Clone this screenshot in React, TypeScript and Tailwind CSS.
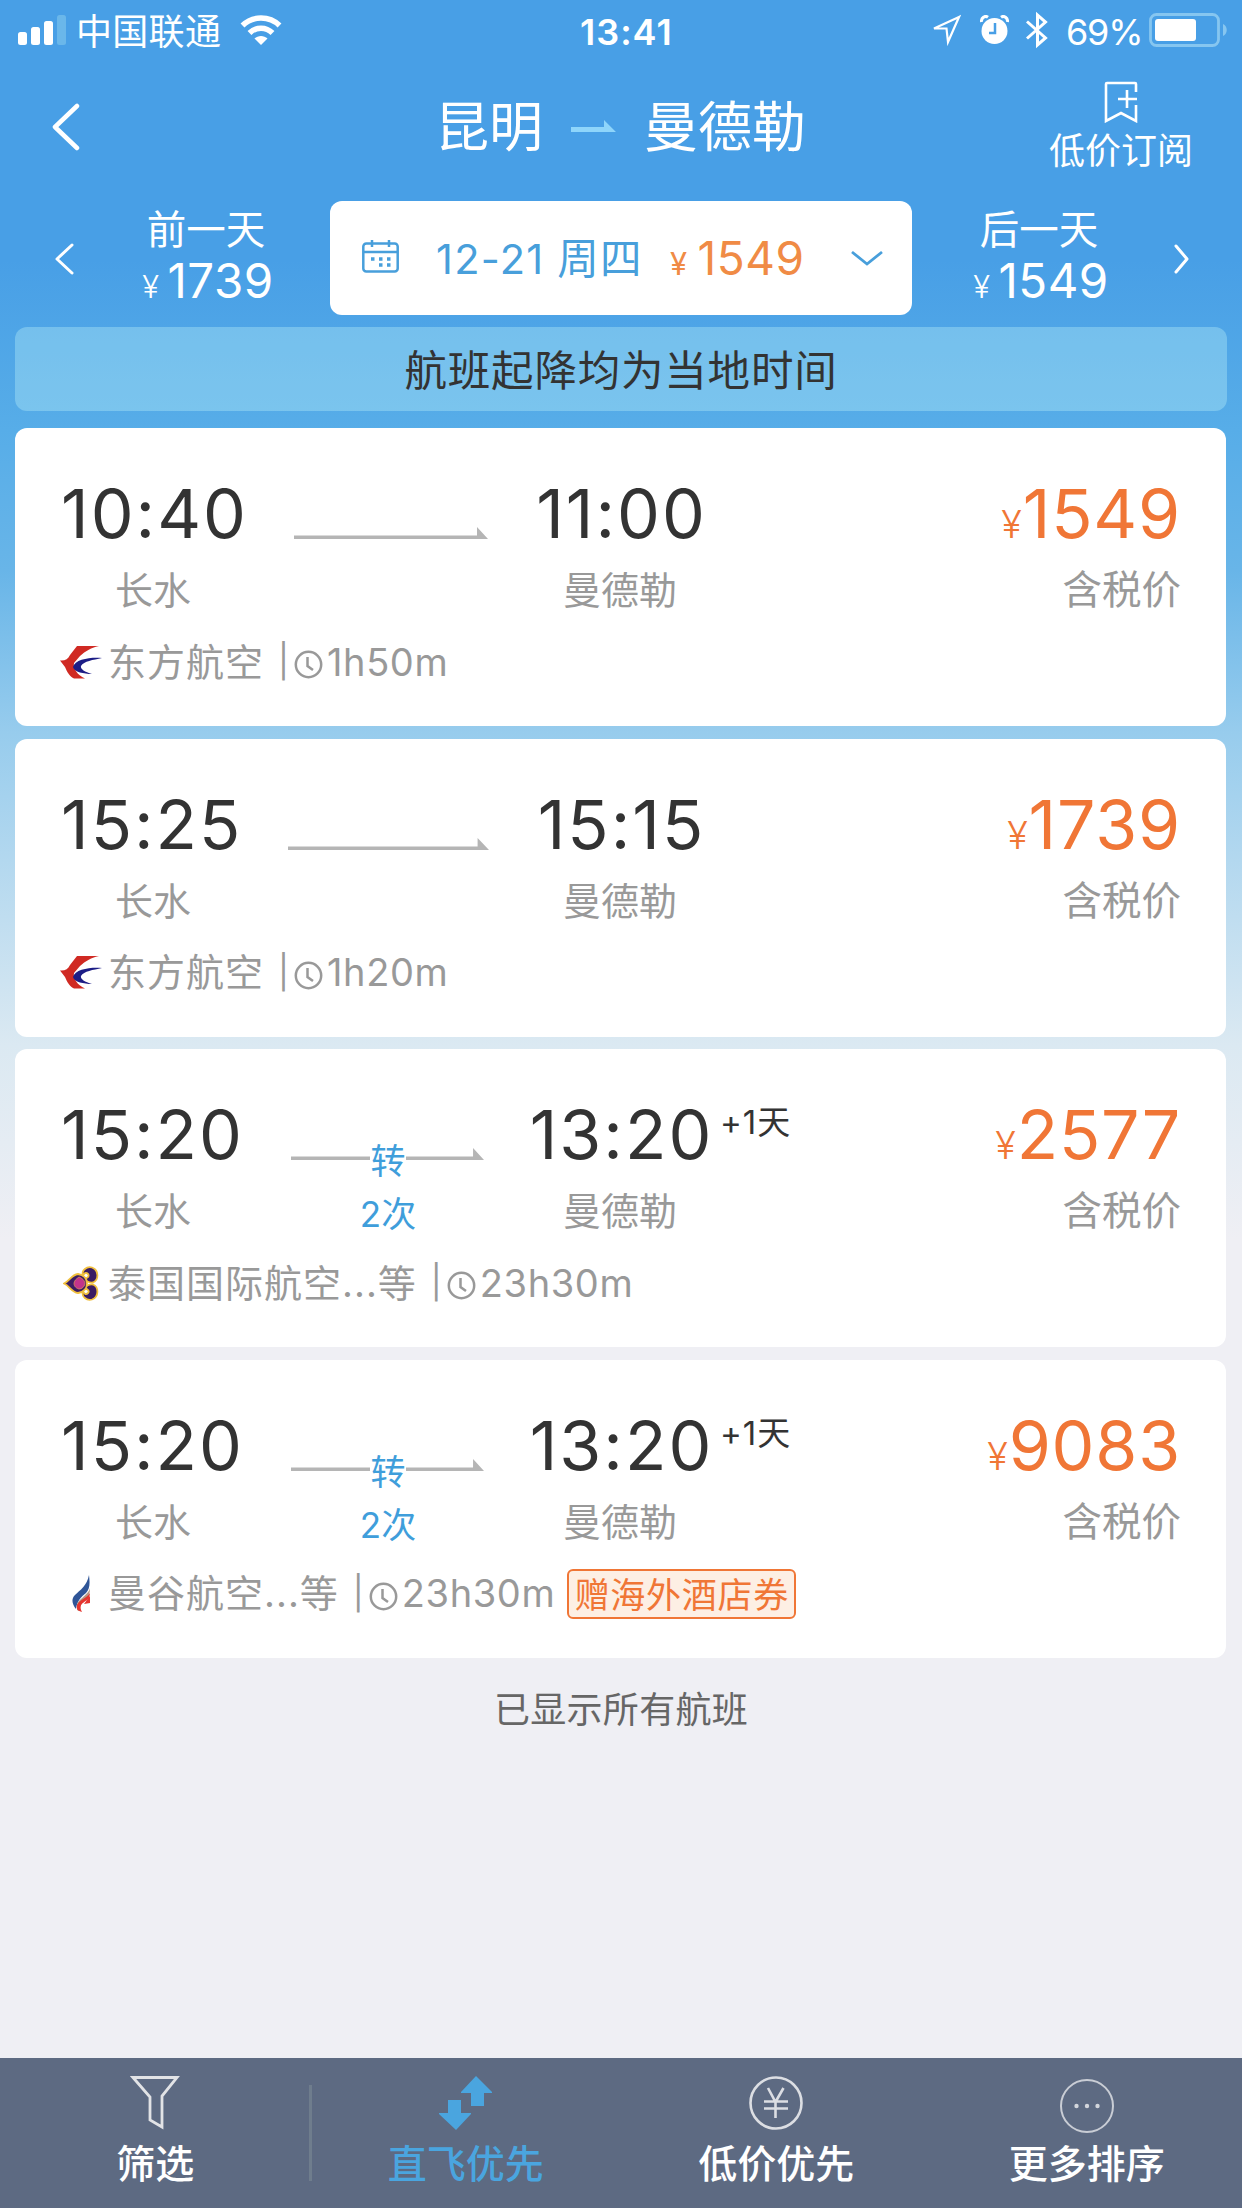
import type { ReactNode } from 'react';

interface Flight {
  depart: string;
  arrive: string;
  nextDay?: boolean;
  transfers?: number;
  lineClass: string;
  price: string;
  airline: string;
  logo: ReactNode;
  duration: string;
  coupon?: string;
}

const EasternLogo = () => (
  <svg className="w-[42px] h-[33px]" viewBox="0 0 42 33" aria-hidden="true">
    <path d="M17 0H39C30 2 26 5 20 10L14 17C13 22 17 29 25 32.500H14C10 31 7 26 5 21L0 14.500C5 15 8 13 10 9Z" fill="#d02a23" />
    <path d="M42 12C31 11 15 13 13 21C14 26 24 28 32 28C25 26 20 23 21 20C24 15 33 14 42 12Z" fill="#1c1d86" />
  </svg>
);

const ThaiLogo = () => (
  <svg className="w-[36px] h-[35px]" viewBox="0 0 36 35" aria-hidden="true">
    <g fill="#3b1c63" stroke="#f0bf3d" strokeWidth="1.800">
      <path d="M20 10C18 4 24 0 29 1.500C36 4 36 14 30 16.500C26 17 22 15 21 12C24 13 27 10 25 8C23 6 21 7 20 10Z" />
      <path d="M20 25C18 31 24 35 29 33.500C36 31 36 21 30 18.500C26 18 22 20 21 23C24 22 27 25 25 27C23 29 21 28 20 25Z" />
      <path d="M1 17.500C7 15 8 9 15 8C21 9 24 13 24 17.500C24 22 21 26 15 27C8 26 7 20 1 17.500Z" />
    </g>
    <path d="M16 11C21 13 22 16 22 18C21 21 19 23 16 23C12 22 11 19 11 17.500C11 15 13 13 16 11Z" fill="#c2348b" stroke="#d98a5a" strokeWidth="0.800" />
  </svg>
);

const BangkokLogo = () => (
  <svg className="w-[19px] h-[37px]" viewBox="0 0 19 37" aria-hidden="true">
    <path d="M17 0C18 8 18 14 14 18C9 22 5 26 4 34C0 29 -1 24 3 20C8 15 15 11 17 0Z" fill="#2f5597" />
    <path d="M18 13C17 19 8 23 5 29V35L7 36C8 30 11 27 14 24C17 21 18 18 18 13Z" fill="#b59a86" />
    <path d="M18 18C18 25 12 26 9 30C8 33 9 35 10 37C6 36 4 34 5 30C8 24 15 23 18 18ZM18 21V28L12 29Z" fill="#e5352f" />
  </svg>
);

const flights: Flight[] = [
  { depart: '10:40', arrive: '11:00', lineClass: 'ml-[3px] w-[194px]', price: '1549', airline: '东方航空', logo: <EasternLogo />, duration: '1h50m' },
  { depart: '15:25', arrive: '15:15', lineClass: 'ml-[-3px] w-[201px]', price: '1739', airline: '东方航空', logo: <EasternLogo />, duration: '1h20m' },
  { depart: '15:20', arrive: '13:20', nextDay: true, transfers: 2, lineClass: 'w-[193px]', price: '2577', airline: '泰国国际航空...等', logo: <ThaiLogo />, duration: '23h30m' },
  { depart: '15:20', arrive: '13:20', nextDay: true, transfers: 2, lineClass: 'w-[193px]', price: '9083', airline: '曼谷航空...等', logo: <BangkokLogo />, duration: '23h30m', coupon: '赠海外酒店券' },
];

function StatusBar() {
  return (
    <div className="h-[60px] pl-[18px] pr-[14px] flex items-center justify-between relative">
      <div className="flex items-center">
        <svg className="w-[48px] h-[30px]" viewBox="0 0 48 30" fill="#fff" aria-hidden="true">
          <rect x="0" y="17" width="9" height="13" rx="2.500" />
          <rect x="13" y="12" width="9" height="18" rx="2.500" />
          <rect x="26" y="6" width="9" height="24" rx="2.500" />
          <rect x="39" y="0" width="9" height="30" rx="2.500" fill="#6ab7ea" />
        </svg>
        <span className="ml-[10px] mt-[4px] text-[36px] leading-[54px] tracking-[0.3px]">中国联通</span>
        <svg className="ml-[19px] w-[42px] h-[30px]" viewBox="0 0 42 30" fill="none" aria-hidden="true">
          <path d="M2.500 10.500C12.500 0.500 29.500 0.500 39.500 10.500" stroke="#fff" strokeWidth="5.500" />
          <path d="M9.500 18C16 11.500 26 11.500 32.500 18" stroke="#fff" strokeWidth="5.500" />
          <path d="M14.500 23.500C18 20 24 20 27.500 23.500L21 30Z" fill="#fff" />
        </svg>
      </div>
      <span className="absolute left-[580px] top-[2px] text-[36px] leading-[60px] font-semibold tracking-[1px]">13:41</span>
      <div className="flex items-center">
        <svg className="w-[30px] h-[32px]" viewBox="0 0 30 32" fill="none" stroke="#fff" strokeWidth="2.200" aria-hidden="true">
          <path d="M28 3L3 14.500H15.500L17 28Z" />
        </svg>
        <svg className="ml-[19px] w-[29px] h-[30px]" viewBox="0 0 29 30" aria-hidden="true">
          <circle cx="14.500" cy="16" r="13" fill="#fff" />
          <path d="M1.500 7C1 3 5 0 8 2.200" stroke="#fff" strokeWidth="3" fill="none" />
          <path d="M27.500 7C28 3 24 0 21 2.200" stroke="#fff" strokeWidth="3" fill="none" />
          <path d="M15 8V18H9" stroke="#489fe6" strokeWidth="2.500" fill="none" />
        </svg>
        <svg className="ml-[17px] w-[22px] h-[38px]" viewBox="0 0 22 38" fill="none" stroke="#fff" strokeWidth="3" aria-hidden="true">
          <path d="M1 10.500L19.500 27L11.500 34V4L19.500 11L1 27.500" />
        </svg>
        <span className="ml-[18px] mt-[3px] w-[76px] text-[36px] tracking-[-1.2px]">69%</span>
        <svg className="ml-[7px] w-[79px] h-[34px]" viewBox="0 0 79 34" aria-hidden="true">
          <rect x="1.500" y="1.500" width="68" height="31" rx="6" fill="none" stroke="#86c6f0" strokeWidth="2.800" />
          <rect x="6" y="6" width="41" height="22" rx="3" fill="#fff" />
          <path d="M74 11C79 13 79 21 74 23Z" fill="#86c6f0" />
        </svg>
      </div>
    </div>
  );
}

function Header() {
  return (
    <header className="h-[130px] flex items-center">
      <svg className="ml-[51px] mt-[3px] w-[30px] h-[48px]" viewBox="0 0 30 48" fill="none" stroke="#fff" strokeWidth="4.500" strokeLinecap="round" strokeLinejoin="round" aria-hidden="true">
        <path d="M26 3L4 24L26 45" />
      </svg>
      <h1 className="ml-[354px] flex items-center text-[54px] leading-[80px]">
        <span className="mt-[6px]">昆明</span>
        <svg className="ml-[28px] mt-[2px] w-[45px] h-[12px]" viewBox="0 0 45 12" fill="#8ed5fb" aria-hidden="true">
          <path d="M0 7H33V0L45 12H0Z" />
        </svg>
        <span className="ml-[28px] mt-[6px]">曼德勒</span>
      </h1>
      <button className="ml-auto mr-[49px] mt-[4px] flex flex-col items-center">
        <svg className="w-[34px] h-[42px]" viewBox="0 0 34 42" fill="none" stroke="#fff" strokeWidth="2.600" aria-hidden="true">
          <path d="M32 11V3Q32 2 31 2H3Q2 2 2 3V40L17 32L32 40V24M23 9V27M14 18H33" />
        </svg>
        <span className="mt-[6px] text-[36px] leading-[44px]">低价订阅</span>
      </button>
    </header>
  );
}

function DayPrice({ label, price }: { label: string; price: string }) {
  return (
    <div className="w-[140px] text-center whitespace-nowrap">
      <div className="text-[39.500px] leading-[50px]">{label}</div>
      <div className="ml-[4px] text-[47.500px] leading-[52px] tracking-[0.5px]">
        <span className="mr-[8px] text-[31px] leading-none font-light">¥</span>
        {price}
      </div>
    </div>
  );
}

function DateBar() {
  return (
    <div className="h-[137px] flex items-start">
      <svg className="ml-[55px] mt-[53px] w-[19px] h-[32px]" viewBox="0 0 19 32" fill="none" stroke="#fff" strokeWidth="3" strokeLinecap="round" strokeLinejoin="round" aria-hidden="true">
        <path d="M17 2L2 16L17 30" />
      </svg>
      <div className="ml-[62px] mt-[15px]">
        <DayPrice label="前一天" price="1739" />
      </div>
      <div className="ml-[54px] mt-[11px] w-[582px] h-[114px] rounded-[12px] bg-white flex items-center text-[#489fdb]">
        <svg className="ml-[32px] mt-[-4px] w-[37px] h-[33px]" viewBox="0 0 37 33" fill="none" stroke="#489fdb" strokeWidth="2.500" aria-hidden="true">
          <rect x="1.300" y="3.500" width="34.400" height="28" rx="3" />
          <path d="M1 12H36M10 0V7M27 0V7" />
          <path d="M9 19h3.500M17 19h3.500M25 19h3.500M17 25h3.500M25 25h3.500" strokeWidth="3.500" />
        </svg>
        <span className="ml-[37px] mt-[3px] w-[206px] text-[41.500px] tracking-[1.250px] whitespace-nowrap">12-21 周四</span>
        <span className="ml-[28px] text-[46px] tracking-[0.500px] text-[#f08b45]"><span className="mr-[10px] text-[31px] leading-none">¥</span>1549</span>
        <svg className="ml-auto mr-[29px] w-[32px] h-[16px]" viewBox="0 0 32 16" fill="none" stroke="#489fdb" strokeWidth="2.800" aria-hidden="true">
          <path d="M1 2L16 14L31 2" />
        </svg>
      </div>
      <div className="ml-[57px] mt-[15px]">
        <DayPrice label="后一天" price="1549" />
      </div>
      <svg className="ml-[64px] mt-[53px] w-[17px] h-[32px]" viewBox="0 0 17 32" fill="none" stroke="#fff" strokeWidth="3" strokeLinecap="round" strokeLinejoin="round" aria-hidden="true">
        <path d="M3 3L14 16L3 29" />
      </svg>
    </div>
  );
}

function FlightCard({ flight }: { flight: Flight }) {
  return (
    <article className="h-[298px] rounded-[12px] bg-white pl-[45px] pr-[45px]">
      <div className="pt-[45px] flex items-start">
        <div className="w-[186px]">
          <div className="pl-[1px] text-[68px] leading-[80px] tracking-[2px] text-[#333] whitespace-nowrap">{flight.depart}</div>
          <div className="mt-[12px] text-center text-[38px] leading-[50px] text-[#999]">长水</div>
        </div>
        <div className="ml-[45px] w-[194px] relative">
          <svg className={`mt-[54px] h-[12px] max-w-none ${flight.lineClass}`} viewBox="0 0 194 12" preserveAspectRatio="none" fill="#b5b5b5" aria-hidden="true">
            <path d="M0 8.500H183V0L194 12H0Z" />
          </svg>
          {flight.transfers && (
            <div className="absolute top-[48px] inset-x-0 flex flex-col items-center text-[35px] text-[#3f9edb]">
              <span className="bg-white leading-[38px]">转</span>
              <span className="mt-[13px] leading-[42px]">{flight.transfers}次</span>
            </div>
          )}
        </div>
        <div className="ml-[40px] w-[190px] relative">
          <div className="pl-[3px] text-center text-[68px] leading-[80px] tracking-[2px] text-[#333] whitespace-nowrap">{flight.arrive}</div>
          <div className="mt-[12px] text-center text-[38px] leading-[50px] text-[#999]">曼德勒</div>
          {flight.nextDay && (
            <span className="absolute left-[195px] top-[8px] text-[33px] leading-[40px] tracking-[1px] text-[#333] whitespace-nowrap">+1天</span>
          )}
        </div>
        <div className="ml-auto text-right">
          <div className="text-[68px] leading-[80px] tracking-[0.800px] text-[#f07636] whitespace-nowrap"><span className="text-[38px] leading-none font-light">¥</span>{flight.price}</div>
          <div className="mt-[12px] text-[39.500px] leading-[50px] text-[#999]">含税价</div>
        </div>
      </div>
      <div className="mt-[22px] h-[50px] flex items-center text-[38px] text-[#999] whitespace-nowrap">
        <div className="w-[42px] flex justify-center">{flight.logo}</div>
        <span className="ml-[6px] tracking-[1px]">{flight.airline}</span>
        <span className="ml-[14px] text-[33px]">|</span>
        <svg className="ml-[5px] mt-[5px] w-[29px] h-[29px]" viewBox="0 0 29 29" fill="none" stroke="#999" strokeWidth="2.500" aria-hidden="true">
          <circle cx="14.500" cy="14.500" r="12.700" />
          <path d="M13.500 7V16L19 20" />
        </svg>
        <span className="ml-[4px] tracking-[0.600px]">{flight.duration}</span>
        {flight.coupon && (
          <span className="ml-[12px] w-[229px] h-[50px] rounded-[6px] border-2 border-[#f07636] bg-[#fdefe4] text-center text-[35px] leading-[48px] tracking-[0.700px] text-[#f07636]">{flight.coupon}</span>
        )}
      </div>
    </article>
  );
}

function TabBar() {
  return (
    <nav className="h-[150px] bg-[#5d6a82] grid grid-cols-4 text-[39px] leading-[50px] font-medium text-white">
      <button className="relative flex flex-col items-center pt-[18px]">
        <svg className="w-[50px] h-[54px]" viewBox="0 0 50 54" fill="none" stroke="#e2e3e6" strokeWidth="2.800" aria-hidden="true">
          <path d="M3 1.500H47L32 20V51L20 44V21Z" />
        </svg>
        <span className="mt-[9px]">筛选</span>
        <span className="absolute right-[-1px] top-[27px] w-[3px] h-[96px] bg-[#6f7d8d]" />
      </button>
      <button className="flex flex-col items-center pt-[18px] text-[#4aa5df]">
        <svg className="w-[54px] h-[54px]" viewBox="0 0 54 54" fill="currentColor" aria-hidden="true">
          <path d="M37 0L53 16V17H45V30H32V17H22V16Z" />
          <path d="M17 54L0 38V37H9V24H22V37H32V38Z" />
        </svg>
        <span className="mt-[9px]">直飞优先</span>
      </button>
      <button className="flex flex-col items-center pt-[18px]">
        <svg className="w-[54px] h-[54px]" viewBox="0 0 54 54" fill="none" stroke="#dcdee3" strokeWidth="2.600" aria-hidden="true">
          <circle cx="27" cy="27" r="25.500" />
          <path d="M19 12L26.500 26L34.500 12M15 25.500H39M15 32.500H39M26.500 25V42" />
        </svg>
        <span className="mt-[9px]">低价优先</span>
      </button>
      <button className="flex flex-col items-center pt-[21px]">
        <svg className="w-[54px] h-[54px]" viewBox="0 0 54 54" fill="#d3d6dc" aria-hidden="true">
          <circle cx="27" cy="27" r="26" fill="none" stroke="#c9cdd5" strokeWidth="2" />
          <circle cx="16.500" cy="27" r="2.200" />
          <circle cx="27" cy="27" r="2.200" />
          <circle cx="37.500" cy="27" r="2.200" />
        </svg>
        <span className="mt-[6px]">更多排序</span>
      </button>
    </nav>
  );
}

export default function App() {
  return (
    <div className="w-[1242px] h-[2208px] flex flex-col overflow-hidden font-['Inter','Noto_Sans_CJK_SC',sans-serif] bg-[linear-gradient(180deg,#489fe6_0px,#489fe6_260px,#57ade8_430px,#68b5e8_570px,#97cced_732px,#dbe9f2_1045px,#efeff4_1240px)]">
      <div className="text-white">
        <StatusBar />
        <Header />
        <DateBar />
      </div>
      <main className="flex-1 px-[15px]">
        <div className="h-[84px] rounded-[12px] bg-[#cffefc]/30 text-center text-[42.500px] leading-[88px] tracking-[0.800px] text-[#333]">航班起降均为当地时间</div>
        <div className="mt-[17px] mr-[1px] flex flex-col gap-[12.500px]">
          {flights.map((flight, i) => (
            <FlightCard key={i} flight={flight} />
          ))}
        </div>
        <p className="mt-[27px] text-center text-[36px] leading-[50px] tracking-[0.300px] text-[#666]">已显示所有航班</p>
      </main>
      <TabBar />
    </div>
  );
}
